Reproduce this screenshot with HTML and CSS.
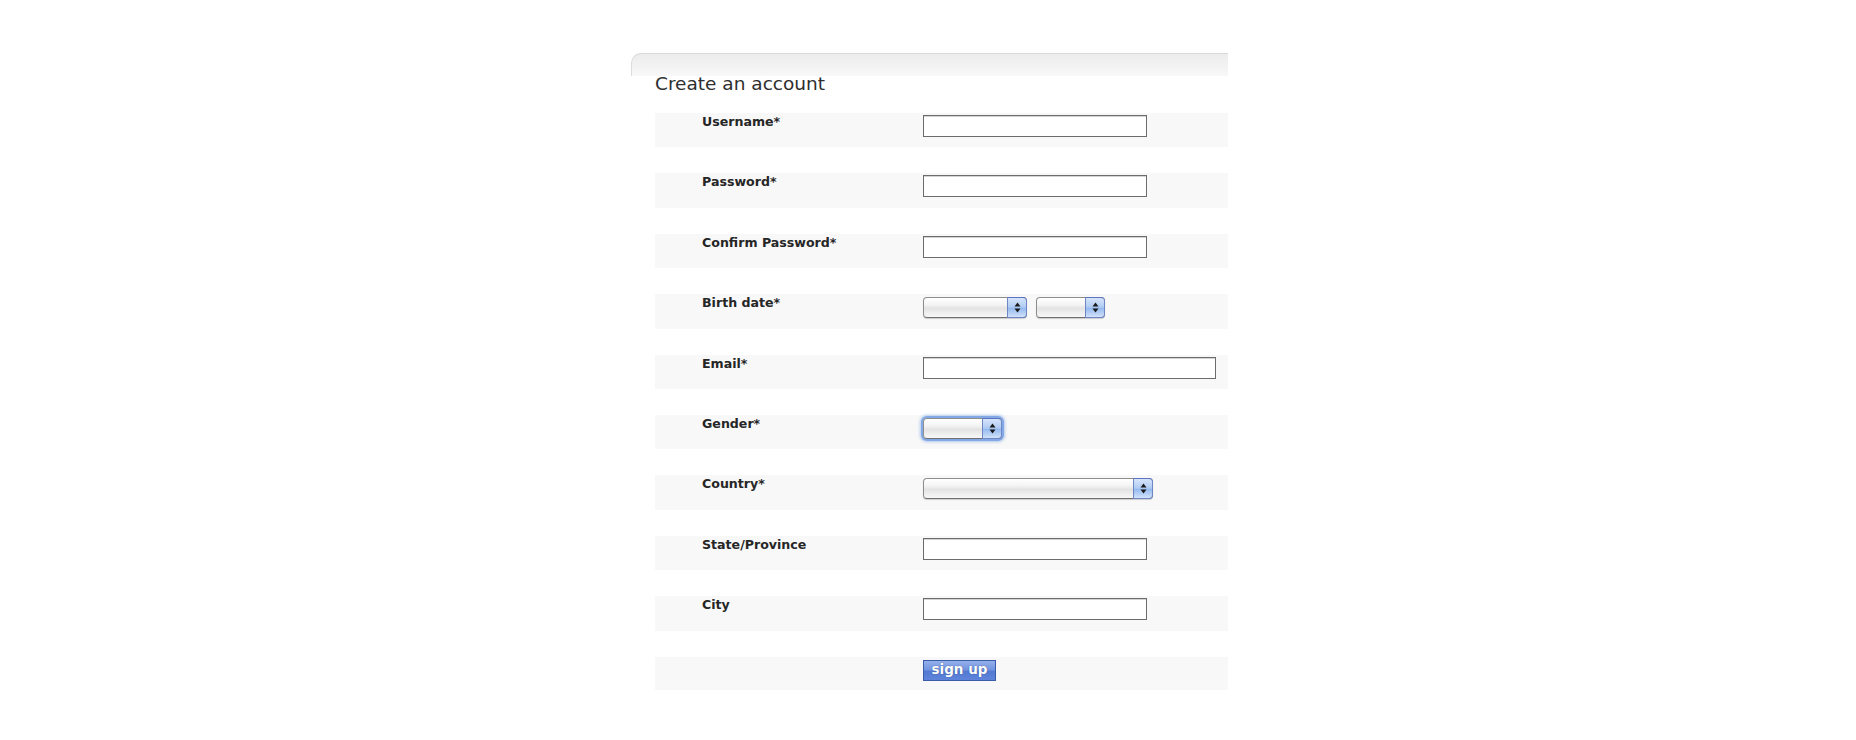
FILE: index.html
```html
<!DOCTYPE html>
<html lang="en">
<head>
    <meta charset="UTF-8">
    <meta name="viewport" content="width=device-width, initial-scale=1.0">
    <title>Create an account</title>
    <link rel="stylesheet" href="styles.css">
</head>
<body>
    <div class="card">
        <div class="card-head"></div>
        <h2 class="card-title">Create an account</h2>

        <form class="signup" action="#" onsubmit="return false;">
            <div class="row">
                <label for="username">Username*</label>
                <div class="field"><input class="text" type="text" id="username"></div>
            </div>
            <div class="row">
                <label for="password">Password*</label>
                <div class="field"><input class="text" type="password" id="password"></div>
            </div>
            <div class="row">
                <label for="confirm">Confirm Password*</label>
                <div class="field"><input class="text" type="password" id="confirm"></div>
            </div>
            <div class="row">
                <label>Birth date*</label>
                <div class="field">
                    <span class="select day">
                        <select><option></option></select>
                        <span class="spin"><svg width="7" height="11" viewBox="0 0 7 11"><path d="M3.5 0.5 L6.5 4.5 L0.5 4.5 Z M0.5 6.5 L6.5 6.5 L3.5 10.5 Z" fill="#1a1a1a"/></svg></span>
                    </span>
                    <span class="select month">
                        <select><option></option></select>
                        <span class="spin"><svg width="7" height="11" viewBox="0 0 7 11"><path d="M3.5 0.5 L6.5 4.5 L0.5 4.5 Z M0.5 6.5 L6.5 6.5 L3.5 10.5 Z" fill="#1a1a1a"/></svg></span>
                    </span>
                </div>
            </div>
            <div class="row">
                <label for="email">Email*</label>
                <div class="field"><input class="text wide" type="text" id="email"></div>
            </div>
            <div class="row">
                <label>Gender*</label>
                <div class="field">
                    <span class="select gender focus">
                        <select><option></option></select>
                        <span class="spin"><svg width="7" height="11" viewBox="0 0 7 11"><path d="M3.5 0.5 L6.5 4.5 L0.5 4.5 Z M0.5 6.5 L6.5 6.5 L3.5 10.5 Z" fill="#1a1a1a"/></svg></span>
                    </span>
                </div>
            </div>
            <div class="row">
                <label>Country*</label>
                <div class="field">
                    <span class="select country">
                        <select><option></option></select>
                        <span class="spin"><svg width="7" height="11" viewBox="0 0 7 11"><path d="M3.5 0.5 L6.5 4.5 L0.5 4.5 Z M0.5 6.5 L6.5 6.5 L3.5 10.5 Z" fill="#1a1a1a"/></svg></span>
                    </span>
                </div>
            </div>
            <div class="row">
                <label for="state">State/Province</label>
                <div class="field"><input class="text" type="text" id="state"></div>
            </div>
            <div class="row">
                <label for="city">City</label>
                <div class="field"><input class="text" type="text" id="city"></div>
            </div>
            <div class="row last">
                <label></label>
                <div class="field"><button class="btn" type="submit">sign up</button></div>
            </div>
        </form>
    </div>
</body>
</html>
```

FILE: styles.css
```css
body {
    margin: 0;
    background: #fff;
    font-family: "DejaVu Sans", Verdana, sans-serif;
    color: #2b2b2b;
}
.card {
    width: 597px;
    margin: 53px 0 0 calc(50% - 297px);
}
.card-head {
    height: 23px;
    box-sizing: border-box;
    border-top: 1px solid #d9d9d9;
    border-left: 1px solid #dcdcdc;
    border-top-left-radius: 10px;
    background: linear-gradient(#ececec, #f8f8f8);
}
.card-title {
    margin: 0 0 0 24px;
    font-size: 18.5px;
    font-weight: normal;
    line-height: 16px;
    color: #2e2e2e;
}
.signup {
    margin: 21px 0 0 24px;
}
.row {
    display: grid;
    grid-template-columns: 221px 1fr;
    height: 34.4px;
    box-sizing: border-box;
    padding: 2px 0 0 47px;
    margin-bottom: 26px;
    background: #f8f8f8;
}
.row.last {
    height: 33px;
    margin-bottom: 0;
}
.row label {
    font-size: 12.6px;
    font-weight: bold;
    line-height: 14px;
    color: #262626;
}
.field {
    display: flex;
    gap: 9px;
    align-items: flex-start;
}
.text {
    display: block;
    width: 224px;
    height: 22px;
    box-sizing: border-box;
    margin: 0;
    padding: 0 3px;
    border: 1px solid #6c6c6c;
    box-shadow: inset 0 1px 0 #d4d4d4;
    background: #fff;
    font: 12px "DejaVu Sans", sans-serif;
}
.text.wide {
    width: 293px;
}

/* aqua style popups */
.select {
    position: relative;
    display: block;
    height: 21px;
    margin-top: 1px;
}
.select select {
    -webkit-appearance: none;
    appearance: none;
    display: block;
    width: 100%;
    height: 21px;
    margin: 0;
    padding: 0 24px 0 6px;
    box-sizing: border-box;
    border: 1px solid #8d8d8d;
    border-bottom-color: #6f6f6f;
    border-radius: 4px;
    background: linear-gradient(#ffffff, #f4f4f4 35%, #e3e3e3 55%, #efefef 80%, #f7f7f7);
    box-shadow: 0 1px 1px rgba(0, 0, 0, 0.18);
    font: 12px "DejaVu Sans", sans-serif;
    outline: none;
}
.spin {
    position: absolute;
    top: 0;
    right: 0;
    width: 20px;
    height: 21px;
    box-sizing: border-box;
    display: flex;
    align-items: center;
    justify-content: center;
    border: 1px solid #6f86c4;
    border-top-color: #5b73c0;
    border-radius: 0 4px 4px 0;
    background: linear-gradient(#d6e4fa, #b2cdf3 45%, #97bbef 55%, #bcd4f5 85%, #d3e3fa);
    pointer-events: none;
}
.select.day {
    width: 104px;
}
.select.month {
    width: 69px;
}
.select.gender {
    width: 79px;
}
.select.country {
    width: 230px;
}
.select.focus select {
    box-shadow: 0 0 0 2px #82a9e6, 0 0 3px 3px rgba(90, 140, 220, 0.45);
}

.btn {
    display: block;
    width: 73px;
    height: 21px;
    margin: 1px 0 0;
    padding: 0 0 2px;
    border: 1px solid #3a5ba8;
    background: linear-gradient(#95afea, #7395e0 45%, #5479d3 55%, #5f84da);
    color: #fff;
    font: bold 13.5px "DejaVu Sans", sans-serif;
    line-height: 17px;
    text-shadow: 0 0 1px rgba(20, 40, 110, 0.8);
    cursor: pointer;
}
```
